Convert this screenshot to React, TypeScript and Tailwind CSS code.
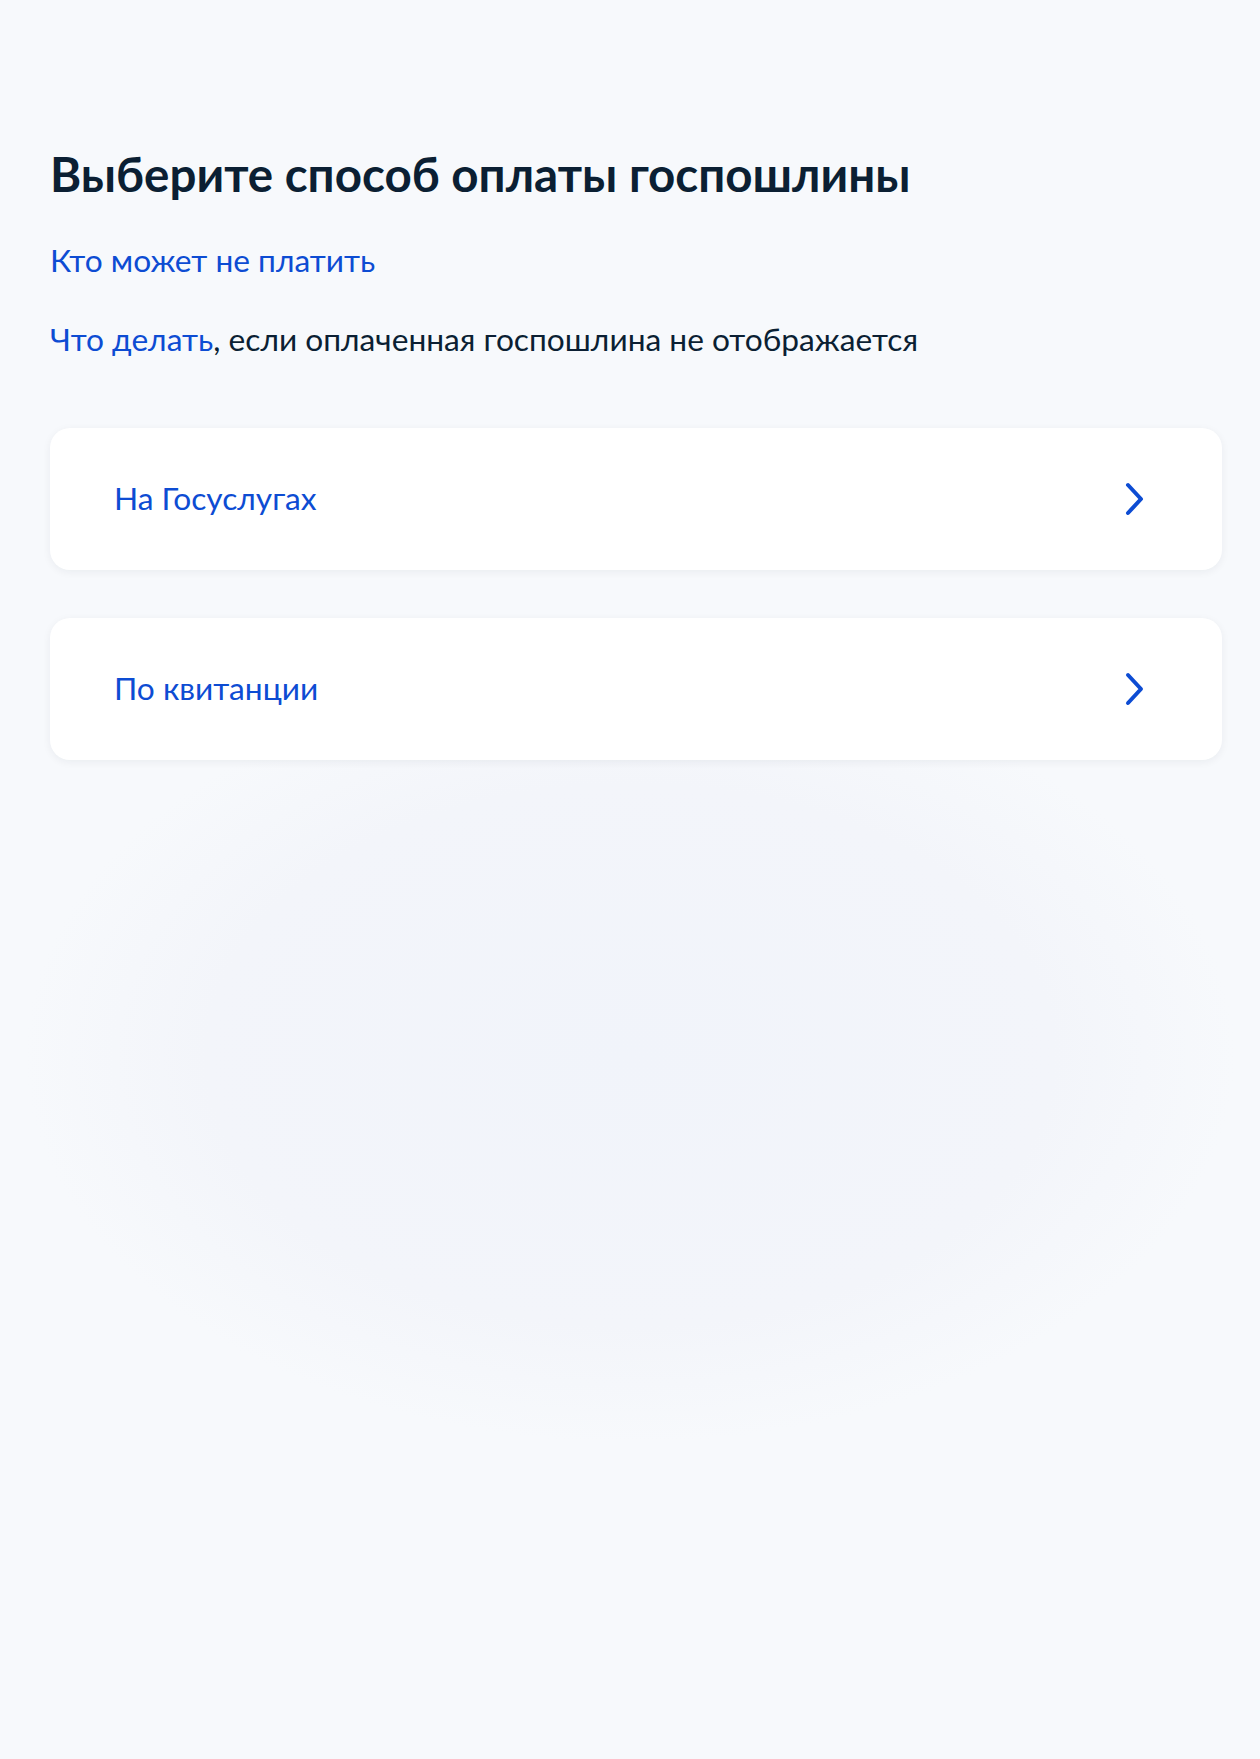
import React from "react";

const font = { fontFamily: "Lato, 'Noto Sans', sans-serif" };

const Chevron = () => (
  <svg width="20" height="34" viewBox="0 0 20 34" fill="none">
    <path
      d="M3 3L16 17L3 31"
      stroke="#0d4cd3"
      strokeWidth="4"
      strokeLinecap="round"
      strokeLinejoin="round"
    />
  </svg>
);

const Option = ({ title }: { title: string }) => (
  <button className="flex h-[142px] w-full items-center justify-between rounded-[20px] bg-white pl-[64px] pr-[77px] text-left shadow-[0_2px_8px_rgba(11,31,51,0.06)]">
    <span className="text-[31.7px] text-[#0d4cd3]">{title}</span>
    <Chevron />
  </button>
);

export default function App() {
  return (
    <div
      className="min-h-[1759px] w-full bg-[#f5f7fb] bg-[radial-gradient(ellipse_48%_22%_at_50%_60%,#f1f4fa_0%,#f3f5fa_70%,#f7f9fc_100%)] pl-[50px] pr-[38px] pt-[140px]"
      style={font}
    >
      <h1 className="text-[47.5px] font-bold leading-[68px] text-[#0b1f33]">
        Выберите способ оплаты госпошлины
      </h1>
      <a className="mt-[32px] block text-[31.7px] leading-[40px] text-[#0d4cd3]">
        Кто может не платить
      </a>
      <p className="mt-[39px] text-[31.7px] leading-[40px] text-[#0b1f33]">
        <a className="text-[#0d4cd3]">Что делать</a>, если оплаченная госпошлина не
        отображается
      </p>
      <div className="mt-[69px] flex flex-col gap-[48px]">
        <Option title="На Госуслугах" />
        <Option title="По квитанции" />
      </div>
    </div>
  );
}
